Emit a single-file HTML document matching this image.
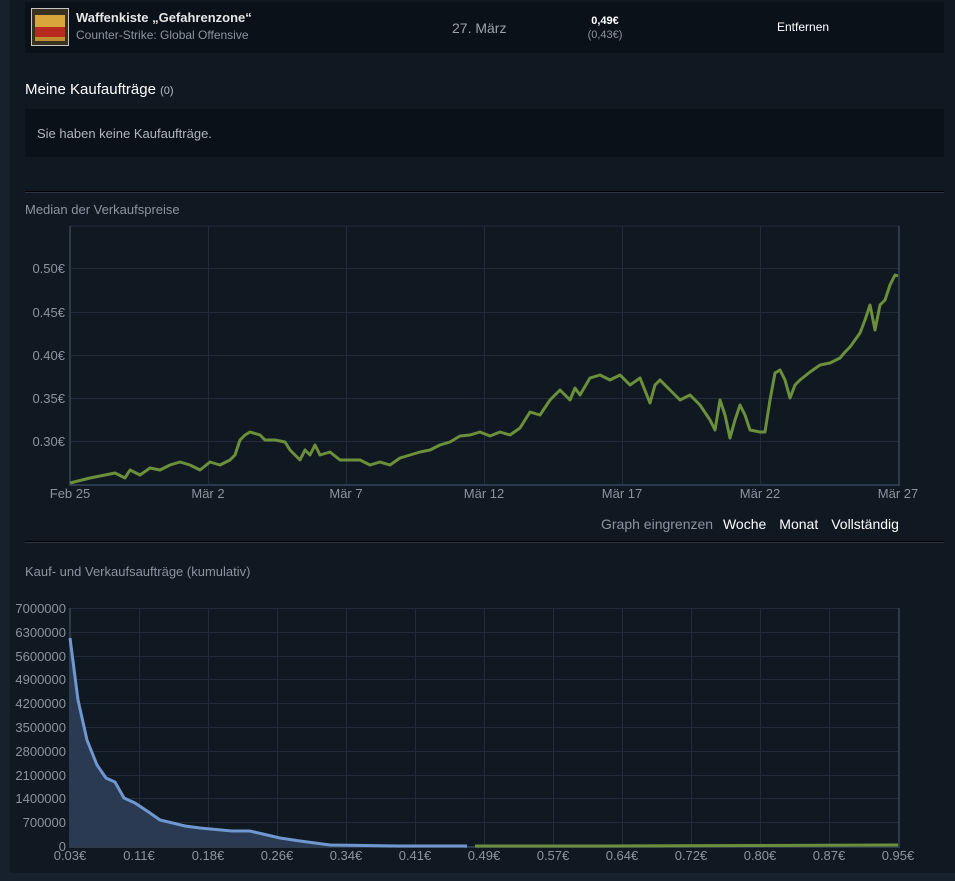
<!DOCTYPE html><html><head><meta charset="utf-8"><style>
body{margin:0;width:955px;height:881px;background:#101822;font-family:"Liberation Sans",Arial,sans-serif;position:relative;overflow:hidden}
.a{position:absolute}
</style></head><body>
<div class="a" style="left:0;top:0;width:10px;height:881px;background:#17202d"></div>
<div class="a" style="left:0;top:873px;width:955px;height:8px;background:#17202d"></div>
<div class="a" style="left:25px;top:2px;width:919px;height:51px;background:#0b1119"></div>
<div class="a" style="left:31px;top:8px;width:38px;height:38px;border:1px solid #c5c5c5;background:#3a3220;box-sizing:border-box">
<div class="a" style="left:3px;top:6px;width:30px;height:12px;background:#d8a63a"></div>
<div class="a" style="left:3px;top:18px;width:30px;height:10px;background:#b82a1e"></div>
<div class="a" style="left:3px;top:28px;width:30px;height:4px;background:#c09030"></div></div>
<div class="a" style="left:76px;top:10px;color:#e6e6e6;font-weight:bold;font-size:13px">Waffenkiste „Gefahrenzone“</div>
<div class="a" style="left:76px;top:28px;color:#8b95a0;font-size:12px">Counter-Strike: Global Offensive</div>
<div class="a" style="left:452px;top:20px;color:#9aa3ad;font-size:14px">27. März</div>
<div class="a" style="left:560px;top:15px;width:90px;text-align:center;color:#fff;font-weight:bold;font-size:11px">0,49€</div>
<div class="a" style="left:560px;top:29px;width:90px;text-align:center;color:#8b95a0;font-size:11px">(0,43€)</div>
<div class="a" style="left:777px;top:20px;color:#fff;font-size:12px">Entfernen</div>
<div class="a" style="left:25px;top:81px;color:#fff;font-size:15px">Meine Kaufaufträge <span style="font-size:11px;color:#b8bec5">(0)</span></div>
<div class="a" style="left:25px;top:109px;width:919px;height:48px;background:#0b1119"></div>
<div class="a" style="left:37px;top:126px;color:#b0b6bd;font-size:13px">Sie haben keine Kaufaufträge.</div>
<div class="a" style="left:25px;top:191px;width:919px;height:1px;background:#000"></div>
<div class="a" style="left:25px;top:192px;width:919px;height:1px;background:#2a3442"></div>
<div class="a" style="left:25px;top:202px;color:#8b95a0;font-size:13px">Median der Verkaufspreise</div>
<div class="a" style="left:25px;top:541px;width:919px;height:1px;background:#000"></div>
<div class="a" style="left:25px;top:542px;width:919px;height:1px;background:#2a3442"></div>
<div class="a" style="left:25px;top:564px;color:#8b95a0;font-size:13px">Kauf- und Verkaufsaufträge (kumulativ)</div>
<div class="a" style="left:601px;top:516px;font-size:14px;color:#8b95a0;white-space:nowrap">Graph eingrenzen <span style="color:#fff;margin-left:6px">Woche</span><span style="color:#fff;margin-left:13px">Monat</span><span style="color:#fff;margin-left:13px">Vollständig</span></div>
<svg class="a" style="left:0;top:0" width="955" height="881" font-family="Liberation Sans,Arial,sans-serif" font-size="13" fill="#8b95a0">
<g stroke="#222d3b" stroke-width="1">
<path d="M70 226H899M70 268.5H899M70 312.5H899M70 355.5H899M70 398.5H899M70 441.5H899"/>
<path d="M208.5 226V484M346.5 226V484M484.5 226V484M622.5 226V484M760.5 226V484"/>
<path d="M70 608.5H899M70 632.5H899M70 656.5H899M70 679.5H899M70 703.5H899M70 727.5H899M70 751.5H899M70 775.5H899M70 798.5H899M70 822.5H899"/>
<path d="M139.5 608V846M208.5 608V846M277.5 608V846M346.5 608V846M415.5 608V846M484.5 608V846M553.5 608V846M622.5 608V846M691.5 608V846M760.5 608V846M829.5 608V846"/>
</g>
<g stroke="#2c3a4c" stroke-width="2" fill="none"><path d="M70 226V485H899V226"/><path d="M70 608V847H899V608"/></g>
<g text-anchor="end"><text x="65" y="273">0.50€</text><text x="65" y="317">0.45€</text><text x="65" y="360">0.40€</text><text x="65" y="403">0.35€</text><text x="65" y="446">0.30€</text></g>
<g text-anchor="middle"><text x="70" y="498">Feb 25</text><text x="208" y="498">Mär 2</text><text x="346" y="498">Mär 7</text><text x="484" y="498">Mär 12</text><text x="622" y="498">Mär 17</text><text x="760" y="498">Mär 22</text><text x="898" y="498">Mär 27</text></g>
<polyline fill="none" stroke="#6b8f3a" stroke-width="3" stroke-linejoin="round" points="70,483 90,478 115,473 125,478 130,470 140,475 150,468 160,470 170,465 180,462 190,465 200,470 210,462 220,465 230,460 235,455 240,440 245,435 250,432 260,435 265,440 275,440 285,442 290,450 295,455 300,460 305,450 310,455 315,445 320,455 330,452 340,460 350,460 360,460 370,465 380,462 390,465 400,458 410,455 420,452 430,450 440,445 450,442 460,436 470,435 480,432 490,436 500,432 510,435 520,428 525,420 530,412 540,415 550,400 560,390 565,395 570,400 575,388 580,395 590,378 600,375 610,380 620,375 630,385 640,378 650,403 655,385 660,380 670,390 680,400 690,395 700,405 710,420 715,430 720,400 725,415 730,438 735,420 740,405 745,415 750,430 760,432 765,432 770,400 775,373 780,370 785,380 790,398 795,385 800,380 810,372 820,365 830,363 840,358 845,352 850,347 860,333 865,320 870,305 875,330 880,305 885,300 890,285 895,275 898,276"/>
<g text-anchor="end" font-size="13"><text x="66" y="613">7000000</text><text x="66" y="637">6300000</text><text x="66" y="661">5600000</text><text x="66" y="684">4900000</text><text x="66" y="708">4200000</text><text x="66" y="732">3500000</text><text x="66" y="756">2800000</text><text x="66" y="780">2100000</text><text x="66" y="803">1400000</text><text x="66" y="827">700000</text><text x="66" y="851">0</text></g>
<g text-anchor="middle"><text x="70" y="860">0.03€</text><text x="139" y="860">0.11€</text><text x="208" y="860">0.18€</text><text x="277" y="860">0.26€</text><text x="346" y="860">0.34€</text><text x="415" y="860">0.41€</text><text x="484" y="860">0.49€</text><text x="553" y="860">0.57€</text><text x="622" y="860">0.64€</text><text x="691" y="860">0.72€</text><text x="760" y="860">0.80€</text><text x="829" y="860">0.87€</text><text x="898" y="860">0.95€</text></g>
<polygon fill="#2a3a52" points="70,846 70,638 78,700 87,740 97,765 106,778 115,782 124,798 135,803 150,813 160,820 185,826 200,828 232,831 250,831 280,838 300,841 330,845 400,846 467,846"/>
<polyline fill="none" stroke="#6f97d0" stroke-width="3" points="70,638 78,700 87,740 97,765 106,778 115,782 124,798 135,803 150,813 160,820 185,826 200,828 232,831 250,831 280,838 300,841 330,845 400,846 467,846"/>
<polyline fill="none" stroke="#6b8f3a" stroke-width="3" points="475,846 600,846 750,845.5 898,845"/>
</svg>
</body></html>
